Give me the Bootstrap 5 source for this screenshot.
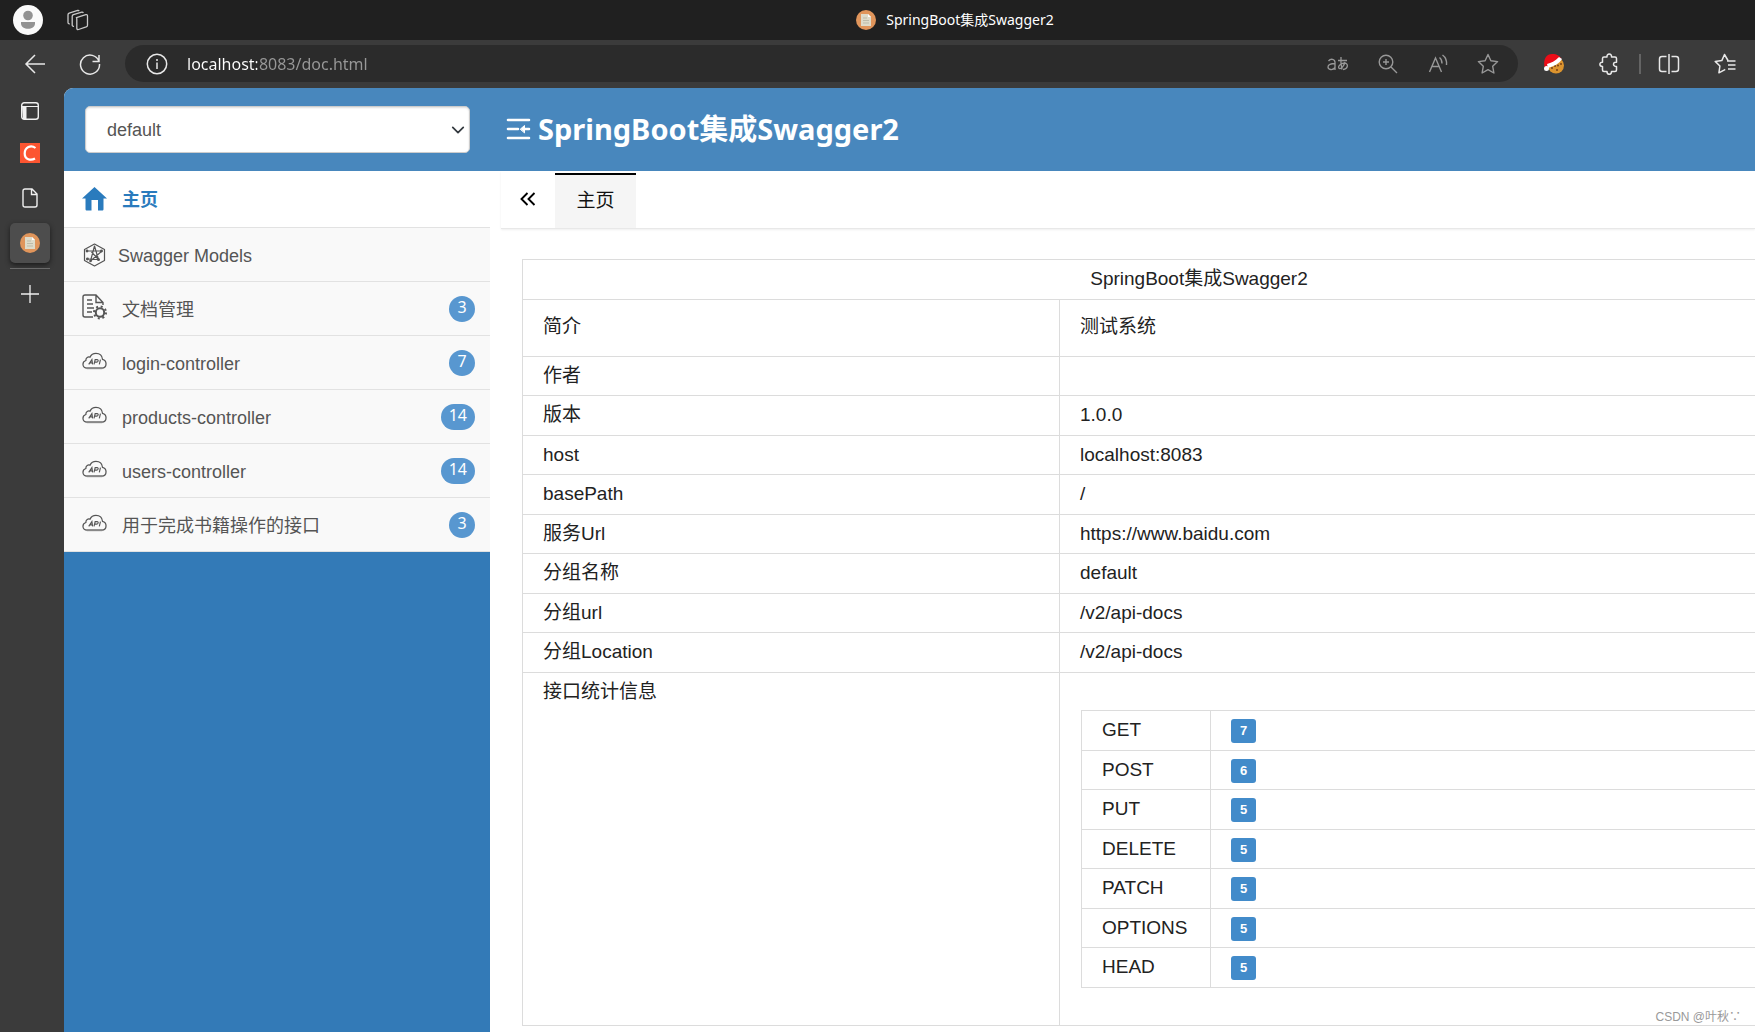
<!DOCTYPE html>
<html lang="zh-CN">
<head>
<meta charset="utf-8">
<meta name="viewport" content="width=device-width, initial-scale=1">
<title>SpringBoot集成Swagger2</title>
<link rel="stylesheet" href="https://cdn.jsdelivr.net/npm/bootstrap@5.3.0/dist/css/bootstrap.min.css">
<style>
  :root { --ui: "Noto Sans", "Noto Sans CJK SC", sans-serif; --doc: "Liberation Sans", "Noto Sans CJK SC", sans-serif; }
  body { font-family: var(--doc); background: #3b3b3b; color: #222; }
  svg { display: block; flex: none; }
  .title-strip { height: 40px; background: #202020; padding-left: 13px; }
  .window-title { font: 14px/20px var(--ui); color: #fff; gap: 10px; padding-left: 66px; }
  .icon-btn { background: none; border: 0; padding: 0; color: #e8e8e8; width: 22px; height: 22px; display: flex; align-items: center; justify-content: center; flex: none; }
  .icon-btn.profile { width: 30px; height: 30px; }
  .tool-strip { height: 48px; padding: 5px 19px 6px 24px; }
  .reload { margin-left: 33px; }
  .puzzle { margin: 0 19px 0 33px; }
  .split { margin: 0 34px 0 17px; }
  .address { height: 37px; border-radius: 19px; background: #2b2b2b; padding: 0 19px 0 21px; margin: 0 25px 0 24px; }
  .address .icon-btn.dim { color: #989898; }
  .address input { background: linear-gradient(90deg, #fff 70px, #989898 70px); -webkit-background-clip: text; background-clip: text; color: transparent; border: 0; outline: 0; padding: 0; font: 16px/24px var(--ui); min-width: 0; margin-left: 19px; }
  .icon-set { gap: 28px; }
  .tool-rule { width: 2px; height: 20px; background: #646464; }
  .side-rail { width: 64px; padding: 6px 14px 0 10px; gap: 5px; flex: none; }
  .rail-btn { background: none; border: 0; padding: 0; width: 40px; height: 40px; color: #f0f0f0; display: flex; align-items: center; justify-content: center; }
  .rail-btn.short-btn { height: 34px; }
  .rail-btn.current { background: #4d4d4d; border-radius: 5px; box-shadow: 0 2px 5px #1b1b1b; }
  .rail-rule { height: 1px; background: #6a6a6a; }
  .doc-page { background: #fff; border-top-left-radius: 9px; min-width: 0; overflow: hidden; }
  .doc-header { background: #4887bd; height: 83px; padding-left: 21px; }
  .group-pick { width: 385px; height: 47px; border: 1px solid #ccc; border-radius: 5px; color: #555; font-size: 18px; padding: 2px 36px 0 21px; background-position: right 3px center; background-size: 16px 14px; box-shadow: inset 0 1px 2px #0002; }
  .doc-title { font: bold 29px/40px var(--ui); color: #fff; margin: 0 0 2px 36px; gap: 7px; }
  .doc-menu { width: 426px; background: #337ab7; flex: none; font-size: 18px; }
  .menu-row { height: 54px; background: #f9f9f9; border-bottom: 1px solid #e2e2e2; color: #555; text-decoration: none; padding: 0 15px 0 18px; gap: 15px; }
  .menu-row.active-row { height: 57px; background: #fff; color: #2a7bbd; font-weight: bold; }
  .menu-row.tight { gap: 11px; }
  .menu-text { padding-top: 3px; }
  .menu-row .lifted { margin-bottom: 3px; }
  .count-pill { background: #5897d0; color: #fff; font: 16px/22px var(--ui); height: 26px; min-width: 26px; border-radius: 13px; text-align: center; padding: 0 8px 4px; }
  .doc-main { padding-left: 11px; min-width: 0; }
  .tab-strip { height: 58px; padding: 2px 0 0 16px; border-bottom: 1px solid #e8e8e8; box-shadow: 0 1px 2px #0001; }
  .tab-prev { color: #000; height: 52px; margin-right: 16px; }
  .page-tab { width: 81px; height: 55px; background: #f5f5f5; border: 0; border-top: 2px solid #000; font-size: 19px; color: #111; padding: 0; }
  /* the table keeps running past the right edge of the pane */
  .info-wrap { margin: 30px -121px 0 21px; }
  .info-grid { width: 100%; font-size: 19px; line-height: 28px; border-collapse: collapse; color: #222; }
  .info-grid td, .info-grid th { border: 1px solid #dcdcdc; padding: 5px 20px; vertical-align: top; font-weight: normal; text-align: left; height: 39px; }
  .info-grid .name-col { width: 537px; }
  .outer-grid > tbody > tr:nth-child(odd) > *, .verb-grid tr:nth-child(odd) > * { height: 40px; }
  .outer-grid > thead > tr > th { height: 40px; text-align: center; }
  .outer-grid > tbody > tr.intro > * { height: 57px; padding-top: 13px; padding-bottom: 13px; }
  .outer-grid > tbody > tr > td.stats { padding: 37px 20px 37px 21px; }
  .verb-grid th { width: 129px; }
  .verb-tag { display: block; width: 25px; height: 24px; background: #428bca; color: #fff; font: bold 13px/24px var(--doc); text-align: center; border-radius: 3px; margin-top: 3px; }
  .source-note { position: absolute; right: 14px; bottom: 6px; font-size: 12px; line-height: 18px; color: #999; }
</style>
<script src="https://cdn.jsdelivr.net/npm/bootstrap@5.3.0/dist/js/bootstrap.bundle.min.js" defer></script>
</head>
<body class="vh-100 overflow-hidden d-flex flex-column position-relative">

<svg width="0" height="0" class="position-absolute" aria-hidden="true">
  <symbol id="fav" viewBox="0 0 20 20"><circle cx="10" cy="10" r="10" fill="#e0955b"/><path d="M5 4h7l3 3v9H5z" fill="#dedbca"/><path d="M12 4v3h3z" fill="#fff"/><path d="M7 8h4M7 10.500h6M7 13h6" stroke="#bdbba9"/></symbol>
  <symbol id="cloud" viewBox="0 0 26 18"><path d="M5.500 16.500C2.500 16.500 1 14.700 1 12.500c0-2 1.300-3.500 3-4C3.800 5.500 6.500 4.200 8.300 5 9.500 2.400 11.800 1 14.500 1c4 0 6.500 2.700 6.800 6.200 2.200.5 3.700 2.400 3.700 4.700 0 2.600-1.800 4.600-4.500 4.600z" fill="none" stroke="#555" stroke-width="1.300"/><path d="M5 16.500h16" stroke="#888" stroke-width="2"/><path d="M7 12.500l3.300-5 .7 5M8.300 11h2.500M12.500 12.500l1.200-5h2c1.800 0 1.200 2.700-.5 2.700h-2M18 12.500l1.200-5" fill="none" stroke="#555" stroke-width="1.200"/></symbol>
</svg>

<header class="title-strip d-flex align-items-center">
  <button class="icon-btn profile" aria-label="Profile"><svg width="30" height="30" viewBox="0 0 30 30"><circle cx="15" cy="15" r="15" fill="#fafafa"/><circle cx="15" cy="10.500" r="4.800" fill="#929292"/><path d="M8 17h14v1.500c0 7-14 7-14 0z" fill="#929292"/></svg></button>
  <button class="icon-btn ms-4" aria-label="Workspaces"><svg width="22" height="22" viewBox="0 0 22 22" fill="none" stroke="#c9c9c9" stroke-width="1.300"><path d="M9.500 8.700l9.300-3c1-.3 1.700.2 1.700 1.200v9.300c0 .8-.5 1.400-1.300 1.700l-7.700 2.600c-1 .3-1.700-.2-1.700-1.200V9.500z"/><path d="M7 17.300c-1.200.2-1.800-.3-1.800-1.300V7.300c0-.8.400-1.300 1.200-1.600l8.400-2.500c.8-.2 1.200 0 1.500.7"/><path d="M2.800 14.800C1.500 15 1 14.300 1 13.500V5.700c0-.8.400-1.300 1.200-1.600l8.500-2.600c.8-.2 1.200.1 1.500.6"/></svg></button>
  <div class="window-title flex-grow-1 d-flex align-items-center justify-content-center"><svg width="20" height="20"><use href="#fav"/></svg><span>SpringBoot集成Swagger2</span></div>
</header>

<nav class="tool-strip d-flex align-items-center">
  <button class="icon-btn" aria-label="Back"><svg width="22" height="20" viewBox="0 0 22 20" fill="none" stroke="currentColor" stroke-width="1.500"><path d="M21 10H2M11 1L2 10l9 9"/></svg></button>
  <button class="icon-btn reload" aria-label="Reload"><svg width="22" height="22" viewBox="0 0 22 22" fill="none" stroke="currentColor" stroke-width="1.500"><path d="M20 8.500A9.500 9.500 0 1 0 20.500 11M20 2v6.500h-6.500"/></svg></button>
  <div class="address flex-grow-1 d-flex align-items-center">
    <button class="icon-btn" aria-label="Site information"><svg width="22" height="22" viewBox="0 0 22 22" fill="none" stroke="currentColor" stroke-width="1.500"><circle cx="11" cy="11" r="9.700"/><path d="M11 9.500V16M11 6v2"/></svg></button>
    <input type="text" class="flex-grow-1" value="localhost:8083/doc.html" aria-label="Address" spellcheck="false">
    <div class="icon-set d-flex">
      <button class="icon-btn dim" aria-label="Translate"><svg width="22" height="18" viewBox="0 0 22 18" fill="none" stroke="currentColor" stroke-width="1.300"><path d="M1.500 6C3.500 3.500 8 3.500 8 7.500V15M8 8.500C4 8.500 1 9.500 1 12s4.500 4 7 .5M11 5.500h9M14 2c-.5 5 0 8 1 12.500M18 7c-1 4-3.500 7-5.500 6.500-2.500-1 .5-5.500 5-5.500 4.500.5 3.500 6-1.500 6.500"/></svg></button>
      <button class="icon-btn dim" aria-label="Zoom"><svg width="20" height="20" viewBox="0 0 20 20" fill="none" stroke="currentColor" stroke-width="1.400"><circle cx="8" cy="8" r="6.800"/><path d="M13 13l6 6M8 5v6M5 8h6"/></svg></button>
      <button class="icon-btn dim" aria-label="Read aloud"><svg width="21" height="20" viewBox="0 0 21 20" fill="none" stroke="currentColor" stroke-width="1.400"><path d="M1.500 18L7.500 4l6 14M4 12.500h7.500M11.500 3.500c2 1.500 2.500 3.500 2.500 6M14.500 1c3.500 2.500 4.500 5.500 4 10"/></svg></button>
      <button class="icon-btn dim" aria-label="Add to favourites"><svg width="22" height="22" viewBox="0 0 22 22" fill="none" stroke="currentColor" stroke-width="1.400" stroke-linejoin="round"><path d="M11 1.500l2.900 6.200 6.700.9-4.900 4.700 1.200 6.700-5.900-3.300L5.100 20l1.200-6.700L1.400 8.600l6.700-.9z"/></svg></button>
    </div>
  </div>
  <button class="icon-btn" aria-label="Cookie extension"><svg width="22" height="22" viewBox="0 0 22 22"><circle cx="13" cy="12.500" r="8" fill="#dc942e"/><circle cx="9" cy="15" r="1" fill="#784117"/><circle cx="12" cy="13" r="1" fill="#784117"/><circle cx="15" cy="12.500" r="1" fill="#784117"/><circle cx="18" cy="11" r="1" fill="#784117"/><circle cx="14" cy="17" r="1" fill="#784117"/><path d="M1.500 14C0 5 4 1 9 1c5 0 8 2 9.500 5L5 12l-1 4z" fill="#eb0d18"/><path d="M4 11c4-1 8-3 12-7l3 2c-3 5-8 7-14 9z" fill="#fff"/><circle cx="3.500" cy="15.500" r="2.500" fill="#fff"/></svg></button>
  <button class="icon-btn puzzle" aria-label="Extensions"><svg width="20" height="22" viewBox="0 0 20 22" fill="none" stroke="currentColor" stroke-width="1.500" stroke-linejoin="round"><path d="M5 4h3c-.5-4 5-4 4.500 0H16c1 0 1.500.5 1.500 1.500v3.700c-4-.7-4 4.500 0 4.300V17c0 1-.5 1.500-1.500 1.500h-3.500c0 3.700-4.500 3.700-4.500 0H5c-1 0-1.500-.5-1.500-1.500v-3.500c-3.500 0-3.500-4.500 0-4.300V5.500C3.500 4.500 4 4 5 4z"/></svg></button>
  <span class="tool-rule"></span>
  <button class="icon-btn split" aria-label="Split screen"><svg width="22" height="20" viewBox="0 0 22 20" fill="none" stroke="currentColor" stroke-width="1.500"><path d="M8.500 2.500H4c-1.500 0-2.500 1-2.500 2.500v10c0 1.500 1 2.500 2.500 2.500h4.500M13.500 2.500H18c1.500 0 2.500 1 2.500 2.500v10c0 1.500-1 2.500-2.500 2.500h-4.500M11 0v20"/></svg></button>
  <button class="icon-btn" aria-label="Favourites"><svg width="22" height="22" viewBox="0 0 22 22" fill="none" stroke="currentColor" stroke-width="1.500" stroke-linejoin="round"><path d="M14 7.500L10.500 1.500 7.800 7.600l-6.600.8 4.700 4.600-1 6.800 5.600-3 .7-.4M13 8h8.500M14 12h7.500M14 16h7.500"/></svg></button>
</nav>

<div class="d-flex flex-grow-1 overflow-hidden">
  <aside class="side-rail d-flex flex-column">
    <button class="rail-btn short-btn" aria-label="Tab menu"><svg width="18" height="18" viewBox="0 0 18 18"><rect x=".7" y=".7" width="16.600" height="16.600" rx="2.500" fill="none" stroke="currentColor" stroke-width="1.400"/><path d="M1 4.500h16" stroke="currentColor"/><path d="M1 4.500h4.500V17H2z" fill="currentColor"/></svg></button>
    <button class="rail-btn" aria-label="CSDN tab"><svg width="20" height="20" viewBox="0 0 20 20"><path fill="#fc5531" d="M0 0h20v20H0z"/><path d="M15.500 5C11 1.500 4.700 4 4.700 10.500c0 6 6 7.500 10.300 5" fill="none" stroke="#fff" stroke-width="2.200"/></svg></button>
    <button class="rail-btn" aria-label="New page tab"><svg width="16" height="20" viewBox="0 0 16 20" fill="none" stroke="currentColor" stroke-width="1.400"><path d="M3 1h7l5 5v11c0 1.300-.7 2-2 2H3c-1.300 0-2-.7-2-2V3c0-1.300.7-2 2-2zM9.500 1v5.500H15"/></svg></button>
    <button class="rail-btn current" aria-label="SpringBoot集成Swagger2"><svg width="20" height="20"><use href="#fav"/></svg></button>
    <div class="rail-rule"></div>
    <button class="rail-btn" aria-label="New tab"><svg width="18" height="18" viewBox="0 0 18 18" stroke="currentColor" stroke-width="1.300"><path d="M9 0v18M0 9h18"/></svg></button>
  </aside>

  <div class="doc-page flex-grow-1 d-flex flex-column">
    <div class="doc-header d-flex align-items-center">
      <select class="form-select group-pick" aria-label="Group"><option>default</option></select>
      <h1 class="doc-title d-flex align-items-center"><svg width="25" height="22" viewBox="0 0 25 22" fill="none" stroke="#fff" stroke-width="2.600" stroke-linecap="round"><path d="M2 2h21M2 11h10M2 20h21M18 11h5"/><path d="M14.500 11l4-3.500v7z" fill="#fff" stroke-width="1"/></svg><span>SpringBoot集成Swagger2</span></h1>
    </div>
    <div class="d-flex flex-grow-1 overflow-hidden">
      <nav class="doc-menu">
        <a href="#" class="menu-row active-row d-flex align-items-center"><svg width="25" height="24" viewBox="0 0 25 24"><path d="M12.500 0L25 11.500h-3.500V22c0 1-.5 1.500-1.500 1.500h-4V13H9.500v10.500H5c-1 0-1.500-.5-1.500-1.500V11.500H0z" fill="#2a7bbd"/></svg><span class="menu-text">主页</span></a>
        <a href="#" class="menu-row tight d-flex align-items-center"><svg width="25" height="24" viewBox="0 0 25 24" fill="none" stroke="#555" stroke-width="1.200" stroke-linejoin="round"><path d="M12.500 1L22.500 6.500v11L12.500 23l-10-5.500v-11z"/><path d="M4 8h16L8.500 18 12.500 3l4 13.500L9.500 9M4 16l13 .5"/><g fill="#555" stroke="none"><circle cx="5" cy="8" r="1.400"/><circle cx="19.500" cy="8" r="1.400"/><circle cx="5.500" cy="16" r="1.400"/><circle cx="16.500" cy="16.500" r="1.500"/><circle cx="8.500" cy="18" r="1.300"/></g></svg><span class="menu-text">Swagger Models</span></a>
        <a href="#" class="menu-row d-flex align-items-center"><svg class="lifted" width="25" height="26" viewBox="0 0 25 26" fill="none" stroke="#555" stroke-width="1.400"><path d="M21 11V8.500L14 1H3C1.700 1 1 1.700 1 3v18c0 1.300.7 2 2 2h8M14 1v7.500h7M5 6h5M5 10h6M5 14h7M5 18h5"/><circle cx="18" cy="18.500" r="4.200" stroke-width="2"/><circle cx="18" cy="18.500" r="6" stroke-width="2" stroke-dasharray="2 2.710"/></svg><span class="menu-text">文档管理</span><span class="count-pill ms-auto">3</span></a>
        <a href="#" class="menu-row d-flex align-items-center"><svg class="lifted" width="25" height="18"><use href="#cloud"/></svg><span class="menu-text">login-controller</span><span class="count-pill ms-auto">7</span></a>
        <a href="#" class="menu-row d-flex align-items-center"><svg class="lifted" width="25" height="18"><use href="#cloud"/></svg><span class="menu-text">products-controller</span><span class="count-pill ms-auto">14</span></a>
        <a href="#" class="menu-row d-flex align-items-center"><svg class="lifted" width="25" height="18"><use href="#cloud"/></svg><span class="menu-text">users-controller</span><span class="count-pill ms-auto">14</span></a>
        <a href="#" class="menu-row d-flex align-items-center"><svg class="lifted" width="25" height="18"><use href="#cloud"/></svg><span class="menu-text">用于完成书籍操作的接口</span><span class="count-pill ms-auto">3</span></a>
      </nav>
      <main class="doc-main flex-grow-1 overflow-hidden">
        <div class="tab-strip d-flex">
          <button class="icon-btn tab-prev" aria-label="Previous tabs"><svg width="16" height="14" viewBox="0 0 16 14" fill="none" stroke="currentColor" stroke-width="1.900"><path d="M7.500 1L1.500 7l6 6M14.500 1l-6 6 6 6"/></svg></button>
          <button class="page-tab">主页</button>
        </div>
        <div class="info-wrap">
          <table class="info-grid outer-grid">
            <thead><tr><th colspan="2">SpringBoot集成Swagger2</th></tr></thead>
            <tbody>
              <tr class="intro"><th scope="row" class="name-col">简介</th><td>测试系统</td></tr>
              <tr><th scope="row">作者</th><td></td></tr>
              <tr><th scope="row">版本</th><td>1.0.0</td></tr>
              <tr><th scope="row">host</th><td>localhost:8083</td></tr>
              <tr><th scope="row">basePath</th><td>/</td></tr>
              <tr><th scope="row">服务Url</th><td>https://www.baidu.com</td></tr>
              <tr><th scope="row">分组名称</th><td>default</td></tr>
              <tr><th scope="row">分组url</th><td>/v2/api-docs</td></tr>
              <tr><th scope="row">分组Location</th><td>/v2/api-docs</td></tr>
              <tr><th scope="row">接口统计信息</th><td class="stats">
                <table class="info-grid verb-grid">
                  <tr><th scope="row">GET</th><td><span class="verb-tag">7</span></td></tr>
                  <tr><th scope="row">POST</th><td><span class="verb-tag">6</span></td></tr>
                  <tr><th scope="row">PUT</th><td><span class="verb-tag">5</span></td></tr>
                  <tr><th scope="row">DELETE</th><td><span class="verb-tag">5</span></td></tr>
                  <tr><th scope="row">PATCH</th><td><span class="verb-tag">5</span></td></tr>
                  <tr><th scope="row">OPTIONS</th><td><span class="verb-tag">5</span></td></tr>
                  <tr><th scope="row">HEAD</th><td><span class="verb-tag">5</span></td></tr>
                </table>
              </td></tr>
            </tbody>
          </table>
        </div>
      </main>
    </div>
  </div>
</div>
<div class="source-note">CSDN @叶秋∵</div>
</body>
</html>
